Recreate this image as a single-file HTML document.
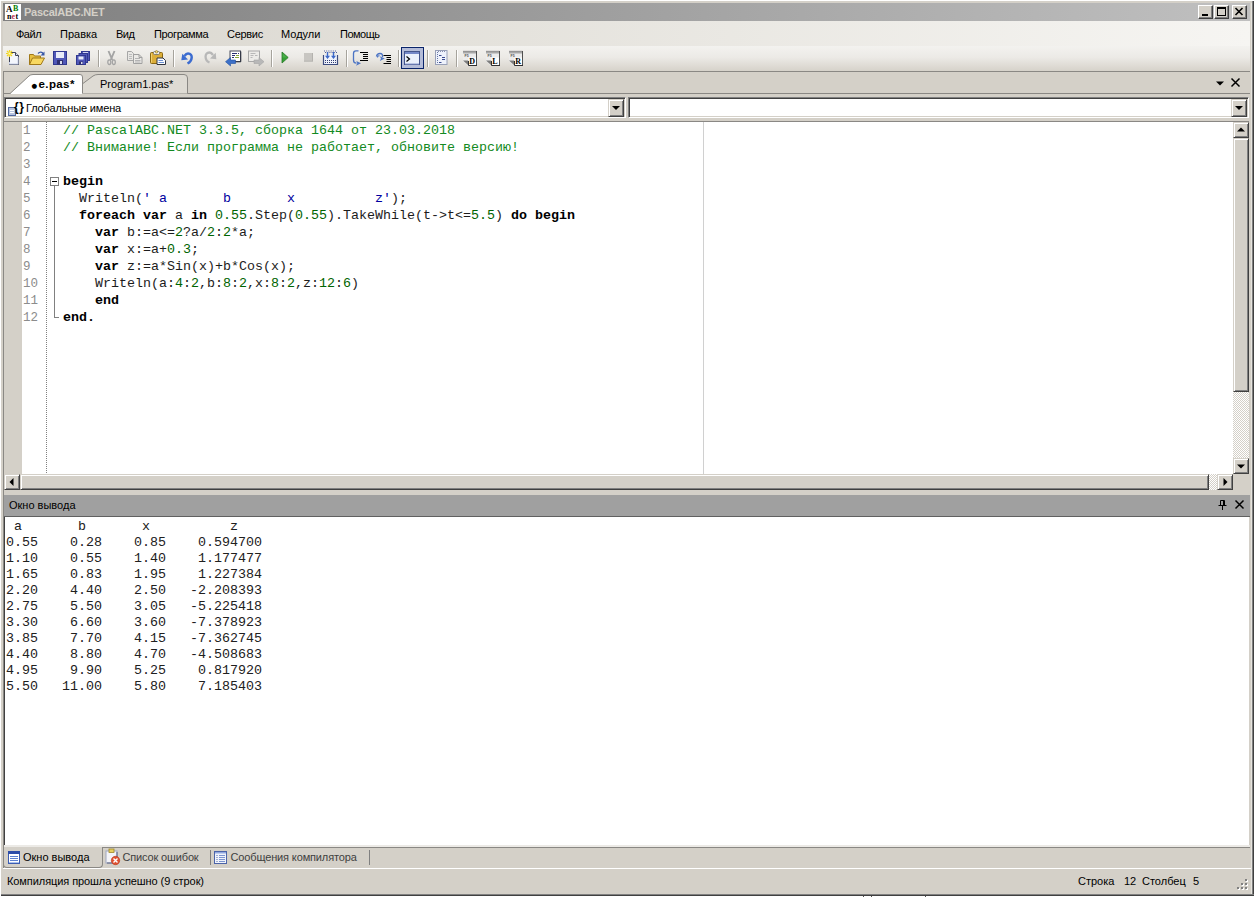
<!DOCTYPE html>
<html><head><meta charset="utf-8">
<style>
html,body{margin:0;padding:0;}
body{width:1254px;height:897px;overflow:hidden;background:#fff;position:relative;font-family:"Liberation Sans",sans-serif;font-size:11px;color:#000;}
.abs,.abs2 div,.abs2 span,.abs2 svg{position:absolute;}
svg{display:block;overflow:visible;}
#win{left:1px;top:1px;width:1251px;height:893px;background:#d4d0c8;}
#frameR{left:1252px;top:1px;width:2px;height:895px;background:linear-gradient(90deg,#808080 0,#808080 1px,#404040 1px);}
#frameB{left:1px;top:894px;width:1253px;height:2px;background:linear-gradient(180deg,#808080 0,#808080 1px,#404040 1px);}
#title{left:3px;top:3px;width:1247px;height:18px;background:linear-gradient(90deg,#808080,#c0c0c0);}
#title .cap{left:21px;top:2px;color:#d4d0c8;font-weight:bold;font-size:11px;line-height:14px;white-space:nowrap;letter-spacing:-0.25px;}
.tbtn{top:2px;width:13px;height:12px;background:#d4d0c8;border:1px solid;border-color:#fff #404040 #404040 #fff;box-shadow:inset -1px -1px 0 #808080;}
#menubar{left:3px;top:21px;width:1247px;height:25px;background:linear-gradient(90deg,#d9d6ce,#f6f5f2);}
.mi{top:6px;font-size:11px;line-height:14px;white-space:nowrap;}
#toolbar{left:3px;top:46px;width:1247px;height:25px;background:linear-gradient(180deg,#f3f2ef 0%,#eceae6 45%,#d6d2ca 100%);}
#tbline{left:3px;top:71px;width:1247px;height:1px;background:#8a8884;}
.sep{top:4px;width:1px;height:17px;background:#a6a39c;box-shadow:1px 0 0 #fff;}
#tabstrip{left:3px;top:72px;width:1247px;height:22px;background:#d4d0c8;}
#dockL{left:3px;top:72px;width:1px;height:796px;background:#8a8884;}
.combo{top:97px;height:21px;background:#fff;box-sizing:border-box;border:1px solid;border-color:#808080 #fff #fff #808080;box-shadow:inset 1px 1px 0 #404040,inset -1px -1px 0 #d4d0c8;}
.cbtn{right:1px;top:1px;width:16px;height:18px;box-sizing:border-box;background:#d4d0c8;border:1px solid;border-color:#d4d0c8 #404040 #404040 #d4d0c8;box-shadow:inset 1px 1px 0 #fff,inset -1px -1px 0 #808080;}
.arrD{left:3px;top:6px;width:0;height:0;border:4px solid transparent;border-top:4px solid #000;border-bottom:0;}
#editor{left:4px;top:121px;width:1245px;height:369px;background:#fff;border-top:1px solid #8a8884;box-sizing:border-box;}
#gutter{left:0;top:0;width:18px;height:352px;background:#d4d0c8;}
#dots{left:42px;top:0;width:1px;height:352px;background:repeating-linear-gradient(180deg,#808080 0,#808080 1px,#fff 1px,#fff 2px);}
#ruler{left:699px;top:0;width:1px;height:352px;background:#d0d0d0;}
.ln{left:19px;width:24px;height:17px;line-height:17px;margin-top:1px;font-family:"Liberation Mono",monospace;font-size:12.5px;color:#8c8c8c;white-space:pre;}
.cl{left:59px;height:17px;line-height:17px;font-family:"Liberation Mono",monospace;font-size:13.33px;color:#1c1c1c;white-space:pre;}
.cl b{font-weight:bold;color:#000;} .cl i{font-style:normal;}
.cm{color:#138a22;} .nm{color:#006400;} .st{color:#0000a0;}
.sb{background:#d4d0c8;box-sizing:border-box;border:1px solid;border-color:#d4d0c8 #404040 #404040 #d4d0c8;box-shadow:inset 1px 1px 0 #fff,inset -1px -1px 0 #808080;}
.chk{background-color:#fff;background-image:linear-gradient(45deg,#d4d0c8 25%,transparent 25%,transparent 75%,#d4d0c8 75%),linear-gradient(45deg,#d4d0c8 25%,transparent 25%,transparent 75%,#d4d0c8 75%);background-size:2px 2px;background-position:0 0,1px 1px;}
#ptitle{left:4px;top:495px;width:1246px;height:22px;background:#a0a0a0;border-bottom:1px solid #606060;box-sizing:border-box;}
#out{left:4px;top:517px;width:1245px;height:328px;background:#fff;border-left:1px solid #404040;box-sizing:border-box;}
.ol{left:1px;height:16px;line-height:16px;font-family:"Liberation Mono",monospace;font-size:13.33px;color:#202020;white-space:pre;}
#btabs{left:4px;top:846px;width:1246px;height:22px;background:#d4d0c8;}
#status{left:3px;top:868px;width:1248px;height:26px;background:#d4d0c8;border-top:1px solid #fff;box-sizing:border-box;}
.st1{top:5px;line-height:14px;white-space:nowrap;}
</style></head><body class="abs2">
<div id="win"></div>
<div id="frameR"></div><div style="left:1251px;top:3px;width:1px;height:891px;background:#e6e4de"></div><div id="frameB"></div>
<div style="left:863px;top:896px;width:1px;height:1px;background:#505050"></div><div style="left:871px;top:896px;width:1px;height:1px;background:#505050"></div><div style="left:925px;top:896px;width:1px;height:1px;background:#505050"></div>
<!-- TITLE -->
<div id="title"><span class="cap">PascalABC.NET</span>
<div class="tbtn" style="left:1195px"><div style="left:3px;top:8px;width:6px;height:2px;background:#000"></div></div>
<div class="tbtn" style="left:1211px"><div style="left:2px;top:1px;width:9px;height:9px;box-sizing:border-box;border:1px solid #000;border-top-width:2px"></div></div>
<div class="tbtn" style="left:1229px"><svg style="left:2px;top:2px" width="8" height="7"><path d="M0.5 0l7 7M7.5 0l-7 7" stroke="#000" stroke-width="1.6" fill="none"/></svg></div>
<svg style="left:2px;top:1px" width="16" height="16" viewBox="0 0 16 16"><rect width="16" height="16" fill="#fff"/><text x="1" y="8" font-family="Liberation Serif,serif" font-weight="bold" font-size="9" fill="#000">A</text><text x="8" y="7" font-family="Liberation Serif,serif" font-weight="bold" font-size="8" fill="#008000">B</text><text x="2" y="15" font-family="Liberation Serif,serif" font-weight="bold" font-size="8" fill="#000">n</text><text x="6.5" y="15" font-family="Liberation Serif,serif" font-weight="bold" font-size="8" fill="#c03050">e</text><text x="10.5" y="15" font-family="Liberation Serif,serif" font-weight="bold" font-size="8" fill="#000">t</text></svg>
</div>
<!-- MENU -->
<div id="menubar">
<span class="mi" style="left:13px;letter-spacing:-0.5px">Файл</span>
<span class="mi" style="left:57px;letter-spacing:0px">Правка</span>
<span class="mi" style="left:113px;letter-spacing:-0.5px">Вид</span>
<span class="mi" style="left:151px;letter-spacing:-0.38px">Программа</span>
<span class="mi" style="left:224px;letter-spacing:-0.3px">Сервис</span>
<span class="mi" style="left:278px;letter-spacing:0px">Модули</span>
<span class="mi" style="left:337px;letter-spacing:-0.5px">Помощь</span>
</div>
<!-- TOOLBAR -->
<div id="toolbar">
<!--ICONS-->
<div style="left:398px;top:1px;width:23px;height:22px;box-sizing:border-box;border:1px solid #0a246a;background:#b4bcd8"></div>
<svg style="left:3px;top:4px" width="16" height="16" viewBox="0 0 16 16"><path d="M3.500 2.500h6l3 3v9h-9z" fill="#f4f6fc" stroke="#404458"/><path d="M9.500 2.500v3h3" fill="#dfe4f3" stroke="#404458"/><path d="M3.500 12v2h8.500v-7" fill="none" stroke="#c8d0e8" stroke-width="1"/><path d="M3.500 0v7M0 3.500h7M1 1l5 5M6 1l-5 5" stroke="#f2d624" stroke-width="1.200"/><rect x="2.500" y="2.500" width="2" height="2" fill="#fffbb0"/></svg>
<svg style="left:26px;top:4px" width="16" height="16" viewBox="0 0 16 16"><path d="M0.500 14.500v-10h4l1 1.500h6v8.500z" fill="#e8c040" stroke="#a07818"/><path d="M0.500 14.500l3-6.500h12l-3.500 6.500z" fill="#f8d860" stroke="#a07818"/><path d="M9 3.500q3-3 5.500 0.500" fill="none" stroke="#3858a8" stroke-width="1.300"/><path d="M15.500 1.500v4h-4z" fill="#3858a8"/></svg>
<svg style="left:49px;top:4px" width="16" height="16" viewBox="0 0 16 16"><rect x="1.500" y="1.500" width="13" height="13" fill="#5058b8" stroke="#303890"/><rect x="4" y="2" width="8" height="6" fill="#e8ecf8"/><rect x="5" y="10" width="6" height="4.500" fill="#303070"/><rect x="8" y="11" width="2" height="3" fill="#d8dcf0"/></svg>
<svg style="left:72px;top:4px" width="16" height="16" viewBox="0 0 16 16"><rect x="6.500" y="1.500" width="8" height="9" fill="#5058b8" stroke="#303890"/><rect x="8" y="2" width="5" height="2" fill="#d0d4f0"/><rect x="4" y="3.500" width="8.500" height="9" fill="#5058b8" stroke="#303890"/><rect x="1.500" y="5.500" width="9" height="9" fill="#5058b8" stroke="#303890"/><rect x="3.500" y="6.500" width="5" height="3" fill="#e8ecf8"/><rect x="4" y="11.500" width="4" height="3" fill="#303070"/><rect x="6" y="12" width="1.500" height="2" fill="#d8dcf0"/></svg>
<svg style="left:101px;top:4px" width="16" height="16" viewBox="0 0 16 16"><path d="M4.500 1L8.300 10M10.500 1L6.700 10" stroke="#a4a4a4" stroke-width="1.900" fill="none"/><ellipse cx="5.300" cy="12.200" rx="1.500" ry="2.300" fill="none" stroke="#a4a4a4" stroke-width="1.300"/><ellipse cx="9.800" cy="12.200" rx="1.500" ry="2.300" fill="none" stroke="#a4a4a4" stroke-width="1.300"/></svg>
<svg style="left:124px;top:4px" width="16" height="16" viewBox="0 0 16 16"><path d="M0.500 1.500h4l2 2v7h-6z" fill="#e8e7e4" stroke="#a6a6a6"/><path d="M2 4.500h3M2 6.500h3M2 8.500h3" stroke="#bcbcbc"/><path d="M6.500 4.500h5.500l3 3v6h-8.500z" fill="#ebeae7" stroke="#a0a0a0"/><path d="M12 4.500v3h3" fill="none" stroke="#a0a0a0"/><path d="M8 8.500h5M8 10.500h5.500M8 12h5.500" stroke="#b4b4b4"/></svg>
<svg style="left:147px;top:4px" width="16" height="16" viewBox="0 0 16 16"><rect x="0.500" y="2.500" width="12" height="11" rx="1" fill="#dcae38" stroke="#8a6814"/><path d="M1.500 3.500v9" stroke="#f0d070"/><rect x="3.500" y="1.500" width="6" height="3" rx="1" fill="#ecebe4" stroke="#6c6c6c" stroke-width="0.800"/><circle cx="6.500" cy="1.800" r="1.200" fill="#f4e080" stroke="#8a6814" stroke-width="0.600"/><path d="M7 8h6l2.500 2.500v4h-8.500z" fill="#fbfcff" stroke="#303440"/><path d="M8.500 10.500h4.500M8.500 12.500h5.500" stroke="#6c90d0"/></svg>
<svg style="left:176px;top:4px" width="16" height="16" viewBox="0 0 16 16"><path d="M8.500 13.500C13.500 11 14.500 3.500 9 3.500C7.500 3.500 6.500 4.500 5.500 6" fill="none" stroke="#3c6cd0" stroke-width="2.500"/><path d="M2.300 10.200L3.300 3.800L9 9.500z" fill="#3c6cd0"/></svg>
<svg style="left:199px;top:4px" width="16" height="16" viewBox="0 0 16 16"><path d="M7.500 12.500C2.500 10.500 2 2.500 7.500 2.500C9 2.500 10 3.500 11 5" fill="none" stroke="#b8b8b8" stroke-width="2.300"/><path d="M14.300 9.200L13.700 2.800L8 8.500z" fill="#b8b8b8"/></svg>
<svg style="left:222px;top:4px" width="16" height="16" viewBox="0 0 16 16"><rect x="5" y="1" width="10.500" height="10.500" fill="#fff" stroke="#484c5c" stroke-width="1"/><path d="M15.800 1.500v10.300h-10.300" fill="none" stroke="#303440" stroke-width="1"/><path d="M7 3.500h5M13 3.500h1M7 5.500h3M7 7.500h2" stroke="#283070" stroke-width="1.200"/><path d="M11 5.500h3M10 7.500h4" stroke="#88a838" stroke-width="1"/><path d="M0.500 11.700L5.500 7.500V10H10.500V13.500H5.500V16Z" fill="#3c70c8" stroke="#2450a0" stroke-width="0.600"/></svg>
<svg style="left:245px;top:4px" width="16" height="16" viewBox="0 0 16 16"><rect x="0.500" y="1" width="11" height="10.500" fill="#ecebe8" stroke="#a8a8a8" stroke-width="1"/><path d="M2.500 3.500h5M2.500 5.500h3M7 5.500h2.500M2.500 7.500h2" stroke="#b8b8b8" stroke-width="1.200"/><path d="M16 11.700L11 7.500V10H6V13.500H11V16Z" fill="#b8b8b8" stroke="#a4a4a4" stroke-width="0.600"/></svg>
<svg style="left:274px;top:4px" width="16" height="16" viewBox="0 0 16 16"><path d="M5 2v11l6.200-5.500z" fill="#34a034" stroke="#2a7a2a" stroke-width="0.800"/><path d="M5.600 3.500v4l4.500 0z" fill="#58b858" opacity="0.600"/></svg>
<svg style="left:297px;top:4px" width="16" height="16" viewBox="0 0 16 16"><rect x="4" y="3" width="9" height="8.700" fill="#b4b2ae"/><rect x="4" y="3" width="8" height="7.700" fill="#c8c6c2"/></svg>
<svg style="left:320px;top:4px" width="16" height="16" viewBox="0 0 16 16"><path d="M0.500 5v9.500h14V5" fill="#eef2fc" stroke="#3c4c80" stroke-width="1.200"/><path d="M1 1h13M2 2.500h12" stroke="#5060a0" stroke-dasharray="1 1.200"/><path d="M4.500 2v5M10.500 2v5" stroke="#3c68c8" stroke-width="1.400"/><path d="M2 5.800h5l-2.500 3.200zM8 5.800h5l-2.500 3.200z" fill="#3c68c8"/><path d="M2 10.500h11.500M2 12.500h11.500" stroke="#303c70" stroke-dasharray="1 1"/></svg>
<svg style="left:349px;top:4px" width="16" height="16" viewBox="0 0 16 16"><path d="M6.500 0.800H4Q1.500 0.800 1.500 3.500V10Q1.500 13.200 4.500 13.200" fill="none" stroke="#4c74c4" stroke-width="1.300"/><path d="M4.300 11L9 13.300L4 15.700L5.300 13.300z" fill="#4c74c4"/><path d="M8 2.500h8M11 4.500h5M11 6.500h5M11 8.500h5M8 10.500h8" stroke="#000" stroke-width="1.100"/></svg>
<svg style="left:372px;top:4px" width="16" height="16" viewBox="0 0 16 16"><path d="M1.500 6.500Q2 3.500 5 3.500Q8 3.500 7.500 7" fill="none" stroke="#4c74c4" stroke-width="1.400"/><path d="M2.500 7.500Q2.500 5.500 4.500 5.800" fill="none" stroke="#4c74c4" stroke-width="1.200"/><path d="M4.800 6.300L9.800 8.500L4.800 11L6 8.500z" fill="#4c74c4"/><path d="M8.500 5.500h7.500M11.500 7.500h4.500M11.500 9.500h4.500M11.500 11.500h4.500M8.500 13.500h7.500" stroke="#000" stroke-width="1.100"/></svg>
<svg style="left:401px;top:4px" width="16" height="16" viewBox="0 0 16 16"><rect x="0.500" y="1.500" width="15" height="13" fill="#eaf0fc" stroke="#44548c"/><rect x="1" y="2" width="14" height="2" fill="#7488c8"/><path d="M15 14h-14" stroke="#8c9cd0"/><path d="M2.500 6.500l3 2.500-3 2.500" fill="none" stroke="#000" stroke-width="1.200"/></svg>
<svg style="left:430px;top:4px" width="16" height="16" viewBox="0 0 16 16"><rect x="2.500" y="0.500" width="11.500" height="14" fill="#eef2fc" stroke="#98a0b8"/><path d="M4.500 2v11" stroke="#6878a8" stroke-dasharray="1 1"/><path d="M5 1.500h8" stroke="#8890b0" stroke-dasharray="1 1"/><path d="M6 5.500h2.500M9 7.500h3M9 9.500h3M6 12.500h2.500" stroke="#3c4c90" stroke-width="1"/></svg>
<svg style="left:459px;top:4px" width="16" height="16" viewBox="0 0 16 16"><path d="M1 1h13.500v14.500h-9l-4.500-4.500z" fill="#ececec"/><path d="M1 1h13.500v2.500h-13.500z" fill="#a8a8a8"/><path d="M1 1.300h13.500" stroke="#8c8c8c" stroke-width="0.800"/><path d="M14.500 1v14.500" stroke="#505050"/><path d="M1 10.500h5.500v5z" fill="#7c7c7c"/><path d="M6.500 7.500h7.500v7.500h-7.500z" fill="#fff"/><path d="M6.500 11v4.500h8.500" stroke="#303030" fill="none"/><text x="2.500" y="6.500" font-size="3.500" font-weight="bold" font-family="Liberation Sans,sans-serif" fill="#505050">F5</text><text x="7.200" y="13.800" font-size="8" font-weight="bold" font-family="Liberation Serif,serif" fill="#000">D</text></svg>
<svg style="left:482px;top:4px" width="16" height="16" viewBox="0 0 16 16"><path d="M1 1h13.500v14.500h-9l-4.500-4.500z" fill="#ececec"/><path d="M1 1h13.500v2.500h-13.500z" fill="#a8a8a8"/><path d="M1 1.300h13.500" stroke="#8c8c8c" stroke-width="0.800"/><path d="M14.500 1v14.500" stroke="#505050"/><path d="M1 10.500h5.500v5z" fill="#7c7c7c"/><path d="M6.500 7.500h7.500v7.500h-7.500z" fill="#fff"/><path d="M6.500 11v4.500h8.500" stroke="#303030" fill="none"/><text x="2.500" y="6.500" font-size="3.500" font-weight="bold" font-family="Liberation Sans,sans-serif" fill="#505050">F5</text><text x="7.200" y="13.800" font-size="8" font-weight="bold" font-family="Liberation Serif,serif" fill="#000">L</text></svg>
<svg style="left:505px;top:4px" width="16" height="16" viewBox="0 0 16 16"><path d="M1 1h13.500v14.500h-9l-4.500-4.500z" fill="#ececec"/><path d="M1 1h13.500v2.500h-13.500z" fill="#a8a8a8"/><path d="M1 1.300h13.500" stroke="#8c8c8c" stroke-width="0.800"/><path d="M14.500 1v14.500" stroke="#505050"/><path d="M1 10.500h5.500v5z" fill="#7c7c7c"/><path d="M6.500 7.500h7.500v7.500h-7.500z" fill="#fff"/><path d="M6.500 11v4.500h8.500" stroke="#303030" fill="none"/><text x="2.500" y="6.500" font-size="3.500" font-weight="bold" font-family="Liberation Sans,sans-serif" fill="#505050">F5</text><text x="7.200" y="13.800" font-size="8" font-weight="bold" font-family="Liberation Serif,serif" fill="#000">R</text></svg>
<!--/ICONS-->
<div class="sep" style="left:95px"></div><div class="sep" style="left:170px"></div><div class="sep" style="left:268px"></div><div class="sep" style="left:343px"></div><div class="sep" style="left:395px"></div><div class="sep" style="left:424px"></div><div class="sep" style="left:453px"></div>
</div>
<div id="tbline"></div>
<!-- TABS -->
<div id="tabstrip">
<div style="left:0;top:21px;width:1247px;height:1px;background:#8a8884"></div>
<svg style="left:0;top:0" width="200" height="22"><path d="M66.500 21.500 L90 4 Q92 2.500 95 2.500 L181 2.500 Q184.500 2.500 184.500 6 L184.500 21.500" fill="#dedbd4" stroke="#8a8884"/><path d="M7 22 L26 4 Q27.500 2.500 30 2.500 L77 2.500 Q79.500 2.500 79.500 5 L79.500 22 Z" fill="#fff" stroke="none"/><path d="M7 21.500 L26 4 Q27.500 2.500 30 2.500 L77 2.500 Q79.500 2.500 79.500 5 L79.500 21.500" fill="none" stroke="#8a8884"/></svg>
<span style="left:28.500px;top:6.500px;line-height:14px;font-size:6.500px;font-family:'DejaVu Sans',sans-serif">●</span>
<span style="left:35.500px;top:5px;line-height:14px;font-weight:bold;white-space:nowrap;font-size:11.500px;letter-spacing:0.400px">e.pas*</span>
<span style="left:97px;top:5px;line-height:14px;white-space:nowrap">Program1.pas*</span>
<svg style="left:1213px;top:9px" width="8" height="5"><path d="M0 0.500h8L4 4.500z" fill="#000"/></svg>
<svg style="left:1228px;top:6px" width="9" height="9"><path d="M0.500 0.500l8 8M8.500 0.500l-8 8" stroke="#000" stroke-width="1.500" fill="none"/></svg>
</div>
<div id="dockL"></div>
<!-- COMBOS -->
<div class="combo" style="left:4px;width:622px"><svg style="left:3px;top:9px" width="9" height="9"><rect x="0.500" y="0.500" width="7" height="8" fill="#b8c4e0" stroke="#5068a0"/><rect x="2" y="3" width="4" height="1" fill="#fff"/><rect x="2" y="5" width="4" height="1" fill="#fff"/></svg><span style="left:9px;top:2px;line-height:14px;font-weight:bold;font-size:12px;letter-spacing:0.500px">{}</span><span style="left:21px;top:3px;line-height:14px;white-space:nowrap;letter-spacing:-0.150px">Глобальные имена</span><div class="cbtn"><div class="arrD"></div></div></div>
<div class="combo" style="left:628px;width:621px"><div class="cbtn"><div class="arrD"></div></div></div>
<!-- EDITOR -->
<div id="editor"><div id="gutter"></div><div id="dots"></div><div id="ruler"></div>
<!--CODE-->
<span class="ln" style="top:0px">1</span>
<span class="cl" style="top:0px"><i class="cm">// PascalABC.NET 3.3.5, сборка 1644 от 23.03.2018</i></span>
<span class="ln" style="top:17px">2</span>
<span class="cl" style="top:17px"><i class="cm">// Внимание! Если программа не работает, обновите версию!</i></span>
<span class="ln" style="top:34px">3</span>
<span class="ln" style="top:51px">4</span>
<span class="cl" style="top:51px"><b>begin</b></span>
<span class="ln" style="top:68px">5</span>
<span class="cl" style="top:68px">  Writeln(<i class="st">' a       b       x          z'</i>);</span>
<span class="ln" style="top:85px">6</span>
<span class="cl" style="top:85px">  <b>foreach</b> <b>var</b> a <b>in</b> <i class="nm">0.55</i>.Step(<i class="nm">0.55</i>).TakeWhile(t-&gt;t&lt;=<i class="nm">5.5</i>) <b>do</b> <b>begin</b></span>
<span class="ln" style="top:102px">7</span>
<span class="cl" style="top:102px">    <b>var</b> b:=a&lt;=<i class="nm">2</i>?a/<i class="nm">2</i>:<i class="nm">2</i>*a;</span>
<span class="ln" style="top:119px">8</span>
<span class="cl" style="top:119px">    <b>var</b> x:=a+<i class="nm">0.3</i>;</span>
<span class="ln" style="top:136px">9</span>
<span class="cl" style="top:136px">    <b>var</b> z:=a*Sin(x)+b*Cos(x);</span>
<span class="ln" style="top:153px">10</span>
<span class="cl" style="top:153px">    Writeln(a:<i class="nm">4</i>:<i class="nm">2</i>,b:<i class="nm">8</i>:<i class="nm">2</i>,x:<i class="nm">8</i>:<i class="nm">2</i>,z:<i class="nm">12</i>:<i class="nm">6</i>)</span>
<span class="ln" style="top:170px">11</span>
<span class="cl" style="top:170px">    <b>end</b></span>
<span class="ln" style="top:187px">12</span>
<span class="cl" style="top:187px"><b>end.</b></span>
<div style="left:46px;top:55px;width:9px;height:9px;box-sizing:border-box;border:1px solid #808080;background:#fff"><div style="left:1px;top:3px;width:5px;height:1px;background:#000"></div></div>
<div style="left:50px;top:64px;width:1px;height:132px;background:#808080"></div>
<div style="left:50px;top:195px;width:5px;height:1px;background:#808080"></div>
<!-- editor scrollbars -->
<div class="chk" style="left:1229px;top:0;width:16px;height:352px"></div>
<div class="sb" style="left:1229px;top:0;width:16px;height:16px"><svg style="left:3px;top:4px" width="8" height="5"><path d="M0 4.5h8L4 0.5z" fill="#000"/></svg></div>
<div class="sb" style="left:1229px;top:16px;width:16px;height:254px"></div>
<div class="sb" style="left:1229px;top:336px;width:16px;height:16px"><svg style="left:3px;top:5px" width="8" height="5"><path d="M0 0.5h8L4 4.5z" fill="#000"/></svg></div>
<div class="chk" style="left:0;top:352px;width:1229px;height:16px"></div>
<div class="sb" style="left:0;top:352px;width:16px;height:16px"><svg style="left:4px;top:3px" width="5" height="8"><path d="M4.5 0v8L0.5 4z" fill="#000"/></svg></div>
<div class="sb" style="left:16px;top:352px;width:1189px;height:16px"></div>
<div class="sb" style="left:1213px;top:352px;width:16px;height:16px"><svg style="left:5px;top:3px" width="5" height="8"><path d="M0.5 0v8L4.5 4z" fill="#000"/></svg></div>
<div style="left:1229px;top:352px;width:16px;height:16px;background:#d4d0c8"></div>
<!--/CODE-->
</div>
<!-- OUTPUT PANEL -->
<div id="ptitle"><span style="left:5px;top:3px;line-height:14px;white-space:nowrap">Окно вывода</span>
<svg style="left:1214px;top:5px" width="9" height="10"><path d="M2.500 0.500h4M2.500 0.500v5M5.500 0.500v5M6.500 0.500v5M0.500 5.500h8M4.500 6v4" stroke="#000" stroke-width="1" fill="none"/></svg>
<svg style="left:1231px;top:5px" width="9" height="9"><path d="M0.500 0.500l8 8M8.500 0.500l-8 8" stroke="#000" stroke-width="1.500" fill="none"/></svg>
</div>
<div id="out">
<span class="ol" style="top:2px"> a       b       x          z</span>
<span class="ol" style="top:18px">0.55    0.28    0.85    0.594700</span>
<span class="ol" style="top:34px">1.10    0.55    1.40    1.177477</span>
<span class="ol" style="top:50px">1.65    0.83    1.95    1.227384</span>
<span class="ol" style="top:66px">2.20    4.40    2.50   -2.208393</span>
<span class="ol" style="top:82px">2.75    5.50    3.05   -5.225418</span>
<span class="ol" style="top:98px">3.30    6.60    3.60   -7.378923</span>
<span class="ol" style="top:114px">3.85    7.70    4.15   -7.362745</span>
<span class="ol" style="top:130px">4.40    8.80    4.70   -4.508683</span>
<span class="ol" style="top:146px">4.95    9.90    5.25    0.817920</span>
<span class="ol" style="top:162px">5.50   11.00    5.80    7.185403</span>
</div>
<div id="btabs">
<div style="left:98px;top:1px;width:1148px;height:1px;background:#8a8884"></div>
<div style="left:0;top:-1px;width:1246px;height:2px;background:#eceae6"></div><div style="left:-1px;top:1px;width:100px;height:21px;box-sizing:border-box;border:1px solid #8a8884;border-top:none;border-radius:0 0 4px 4px;background:#d4d0c8"></div>
<svg style="left:4px;top:5px" width="12" height="13" viewBox="0 0 12 13"><rect x="0.500" y="0.500" width="11" height="12" fill="#fff" stroke="#3c5cb0"/><rect x="0" y="0" width="12" height="3" fill="#2c4ca8"/><path d="M2 5.500h8M2 7.500h8M2 9.500h8" stroke="#5c80d0"/><path d="M1 11.500h10" stroke="#a8c0f0"/></svg>
<span style="left:19px;top:4px;line-height:14px;white-space:nowrap">Окно вывода</span>
<svg style="left:101px;top:3px" width="16" height="17" viewBox="0 0 16 17"><rect x="1" y="2" width="11" height="12" fill="#f4f4f8" stroke="#a0a8c0"/><rect x="4" y="0" width="5" height="3.500" fill="#e8d060" stroke="#a08828" stroke-width="0.800"/><path d="M2 14h10v-11" stroke="#586080" fill="none"/><circle cx="10.500" cy="11.500" r="4.200" fill="#e05030" stroke="#b83418" stroke-width="0.600"/><path d="M8.500 9.500l4 4M12.500 9.500l-4 4" stroke="#fff" stroke-width="1.400"/></svg>
<span style="left:118.500px;top:4px;line-height:14px;white-space:nowrap;color:#404040;letter-spacing:-0.150px">Список ошибок</span>
<div style="left:206px;top:4px;width:1px;height:15px;background:#808080"></div>
<svg style="left:210px;top:5px" width="13" height="13" viewBox="0 0 13 13"><rect x="0.500" y="0.500" width="12" height="12" fill="#f0f4fc" stroke="#4c64a8"/><rect x="1" y="1" width="11" height="1.500" fill="#90a8e0"/><path d="M2.500 4.500h1M2.500 6.500h1M2.500 8.500h1M2.500 10.500h1" stroke="#4c64a8"/><path d="M5 4.500h6M5 6.500h6M5 8.500h6M5 10.500h6" stroke="#7c94d0"/></svg>
<span style="left:226.500px;top:4px;line-height:14px;white-space:nowrap;color:#404040;letter-spacing:-0.140px">Сообщения компилятора</span>
<div style="left:364.500px;top:4px;width:1px;height:15px;background:#808080"></div>
</div>
<!-- STATUS -->
<div id="status">
<span class="st1" style="left:4px;letter-spacing:-0.080px">Компиляция прошла успешно (9 строк)</span>
<span class="st1" style="left:1075px">Строка</span><span class="st1" style="left:1121px">12</span><span class="st1" style="left:1139px">Столбец</span><span class="st1" style="left:1190px">5</span>
<div style="left:1243px;top:11px;width:2px;height:2px;background:#fff"></div><div style="left:1242px;top:10px;width:2px;height:2px;background:#808080"></div><div style="left:1239px;top:15px;width:2px;height:2px;background:#fff"></div><div style="left:1238px;top:14px;width:2px;height:2px;background:#808080"></div><div style="left:1243px;top:15px;width:2px;height:2px;background:#fff"></div><div style="left:1242px;top:14px;width:2px;height:2px;background:#808080"></div><div style="left:1235px;top:19px;width:2px;height:2px;background:#fff"></div><div style="left:1234px;top:18px;width:2px;height:2px;background:#808080"></div><div style="left:1239px;top:19px;width:2px;height:2px;background:#fff"></div><div style="left:1238px;top:18px;width:2px;height:2px;background:#808080"></div><div style="left:1243px;top:19px;width:2px;height:2px;background:#fff"></div><div style="left:1242px;top:18px;width:2px;height:2px;background:#808080"></div>
</div>
</body></html>
